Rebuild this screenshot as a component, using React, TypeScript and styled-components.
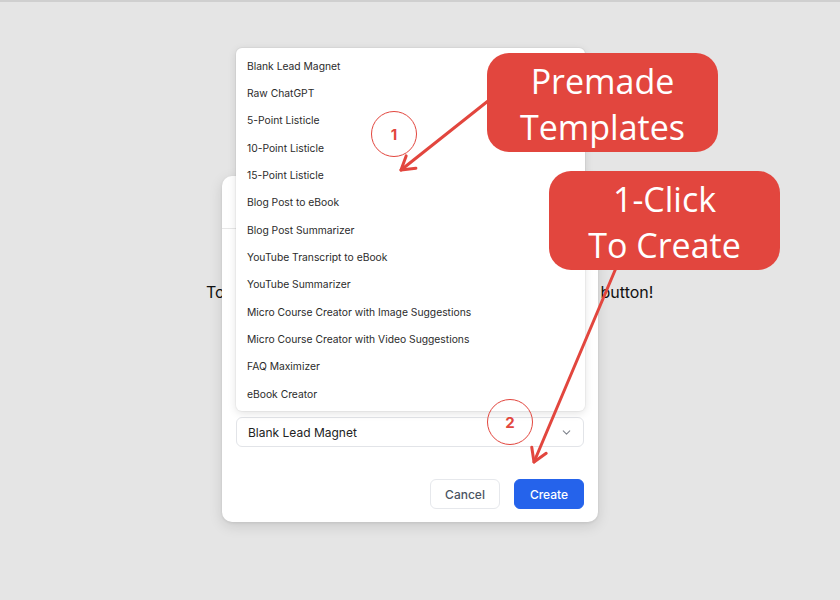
import React from 'react';
import styled, { createGlobalStyle } from 'styled-components';

const GlobalStyle = createGlobalStyle`
  html, body {
    margin: 0;
    padding: 0;
    background: #e5e5e5;
  }
  body {
    font-family: Inter, "Noto Sans", sans-serif;
  }
`;

const RED = '#e2463e';

const templates = [
  'Blank Lead Magnet',
  'Raw ChatGPT',
  '5-Point Listicle',
  '10-Point Listicle',
  '15-Point Listicle',
  'Blog Post to eBook',
  'Blog Post Summarizer',
  'YouTube Transcript to eBook',
  'YouTube Summarizer',
  'Micro Course Creator with Image Suggestions',
  'Micro Course Creator with Video Suggestions',
  'FAQ Maximizer',
  'eBook Creator',
];

const Page = styled.div`
  position: relative;
  width: 840px;
  height: 600px;
  box-sizing: border-box;
  box-shadow: inset 0 2px 0 #cfcfcf;
  padding: 282px 0 0 206px;
  overflow: hidden;
  background: #e5e5e5;
`;

/* page text that sits underneath the dialog */
const Message = styled.p`
  margin: 0;
  font-size: 16px;
  line-height: 20px;
  color: #111111;
  white-space: nowrap;
`;

const Modal = styled.div`
  position: absolute;
  left: 222px;
  top: 176px;
  width: 376px;
  height: 346px;
  box-sizing: border-box;
  background: #ffffff;
  border-radius: 10px;
  box-shadow: 0 4px 14px rgba(0, 0, 0, 0.12), 0 1px 3px rgba(0, 0, 0, 0.08);
  display: flex;
  flex-direction: column;
`;

const ModalHeader = styled.div`
  height: 52px;
  border-bottom: 1px solid #e7e7e7;
  flex-shrink: 0;
`;

const ModalBody = styled.div`
  flex: 1;
  display: flex;
  flex-direction: column;
  padding: 0 14px;
`;

const Select = styled.div`
  margin-top: 188px;
  height: 30px;
  box-sizing: border-box;
  border: 1px solid #e2e4e8;
  border-radius: 6px;
  display: flex;
  align-items: center;
  justify-content: space-between;
  padding: 0 10px 0 11px;
  font-size: 12px;
  color: #222222;
`;

const Footer = styled.div`
  display: flex;
  justify-content: flex-end;
  gap: 14px;
  margin-top: 32px;
`;

const Button = styled.button<{ $primary?: boolean }>`
  height: 30px;
  width: 70px;
  box-sizing: border-box;
  border-radius: 6px;
  font-family: Inter, sans-serif;
  font-size: 12px;
  font-weight: 500;
  border: 1px solid ${(p) => (p.$primary ? '#2563eb' : '#e6e8ec')};
  background: ${(p) => (p.$primary ? '#2563eb' : '#ffffff')};
  color: ${(p) => (p.$primary ? '#ffffff' : '#4b5563')};
`;

const Menu = styled.ul`
  position: absolute;
  left: 14px;
  top: -128px;
  width: 349px;
  margin: 0;
  padding: 4px 0;
  list-style: none;
  background: #ffffff;
  border-radius: 6px;
  box-shadow: 0 2px 8px rgba(0, 0, 0, 0.12), 0 0 0 1px rgba(0, 0, 0, 0.03);
`;

const MenuItem = styled.li`
  height: 27.35px;
  display: flex;
  align-items: center;
  padding-left: 11px;
  font-size: 10.3px;
  color: #2b2b2b;
`;

const Callout = styled.div<{ $x: number; $y: number }>`
  position: absolute;
  left: ${(p) => p.$x}px;
  top: ${(p) => p.$y}px;
  width: 231px;
  height: 99px;
  box-sizing: border-box;
  padding-top: 2px;
  background: ${RED};
  border-radius: 22px;
  display: flex;
  align-items: center;
  justify-content: center;
  text-align: center;
  font-family: "Open Sans", sans-serif;
  font-size: 34px;
  line-height: 46px;
  color: #ffffff;
`;

const Badge = styled.div<{ $x: number; $y: number }>`
  position: absolute;
  left: ${(p) => p.$x}px;
  top: ${(p) => p.$y}px;
  width: 46px;
  height: 46px;
  box-sizing: border-box;
  border: 1.5px solid ${RED};
  border-radius: 50%;
  display: flex;
  align-items: center;
  justify-content: center;
  font-family: Inter, sans-serif;
  font-size: 15px;
  font-weight: 700;
  color: ${RED};
`;

const Overlay = styled.svg`
  position: absolute;
  left: 0;
  top: 0;
  pointer-events: none;
`;

function head(fx: number, fy: number, tx: number, ty: number, len = 15, ang = 0.55) {
  const a = Math.atan2(fy - ty, fx - tx);
  const p1 = [tx + len * Math.cos(a + ang), ty + len * Math.sin(a + ang)];
  const p2 = [tx + len * Math.cos(a - ang), ty + len * Math.sin(a - ang)];
  return `M${p1[0]},${p1[1]} L${tx},${ty} L${p2[0]},${p2[1]}`;
}

const Arrow = ({ fx, fy, tx, ty }: { fx: number; fy: number; tx: number; ty: number }) => (
  <g stroke={RED} strokeWidth={3} fill="none" strokeLinecap="round" strokeLinejoin="round">
    <line x1={fx} y1={fy} x2={tx} y2={ty} />
    <path d={head(fx, fy, tx, ty)} />
  </g>
);

const Chevron = () => (
  <svg width="13" height="13" viewBox="0 0 24 24" fill="none" stroke="#80858e" strokeWidth="2" strokeLinecap="round" strokeLinejoin="round">
    <path d="m6 9 6 6 6-6" />
  </svg>
);

export default function App() {
  return (
    <>
      <GlobalStyle />
      <Page>
        <Message>To get started, pick a template then click the Create button!</Message>

        <Modal>
          <ModalHeader />
          <ModalBody>
            <Select>
              <span>Blank Lead Magnet</span>
              <Chevron />
            </Select>
            <Footer>
              <Button>Cancel</Button>
              <Button $primary>Create</Button>
            </Footer>
          </ModalBody>
          <Menu>
            {templates.map((t) => (
              <MenuItem key={t}>{t}</MenuItem>
            ))}
          </Menu>
        </Modal>

        <Overlay width="840" height="600" viewBox="0 0 840 600">
          <Arrow fx={488} fy={101} tx={401} ty={170} />
          <Arrow fx={616} fy={268} tx={534} ty={462} />
        </Overlay>

        <Callout $x={487} $y={53}>
          Premade
          <br />
          Templates
        </Callout>
        <Callout $x={549} $y={171}>
          1-Click
          <br />
          To Create
        </Callout>
        <Badge $x={371} $y={111}>1</Badge>
        <Badge $x={487} $y={399}>2</Badge>
      </Page>
    </>
  );
}
